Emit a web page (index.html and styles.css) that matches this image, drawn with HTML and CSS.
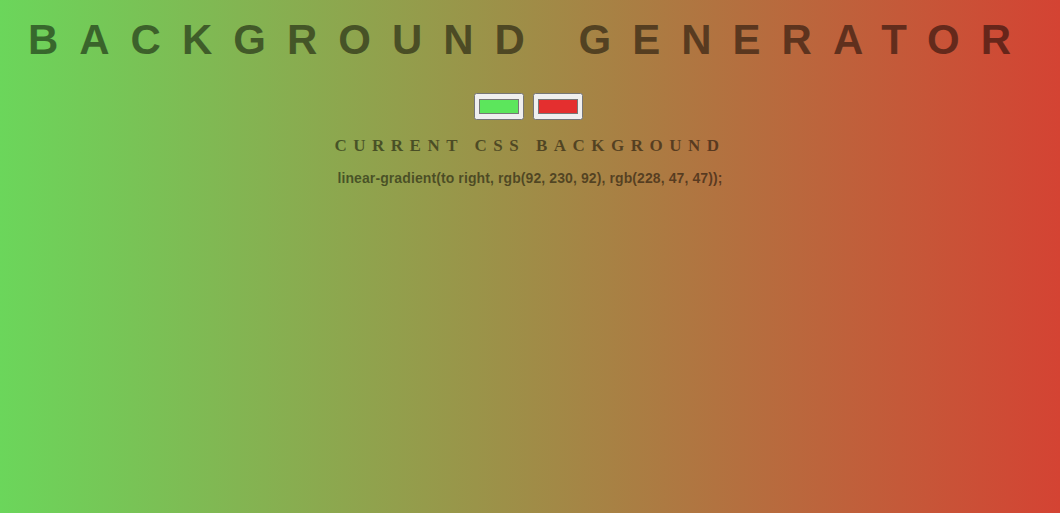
FILE: index.html
```html
<!DOCTYPE html>
<html lang="en">
<head>
<meta charset="utf-8">
<title>Background Generator</title>
<link rel="stylesheet" href="styles.css">
</head>
<body>
<main class="page">
  <h1 class="title">Background Generator</h1>
  <div class="pickers">
    <input class="color1" type="color" name="color1" value="#5ce65c">
    <input class="color2" type="color" name="color2" value="#e42f2f">
  </div>
  <h2 class="subtitle">Current CSS Background</h2>
  <h3 class="css-value">linear-gradient(to right, rgb(92, 230, 92), rgb(228, 47, 47));</h3>
</main>
</body>
</html>
```

FILE: styles.css
```css
html, body {
  margin: 0;
  padding: 0;
  height: 100%;
}

body {
  background: linear-gradient(to right, #6bd65b, #d44333);
  color: rgba(0, 0, 0, 0.5);
  text-align: center;
}

.page {
  padding-top: 16px;
  display: flex;
  flex-direction: column;
  align-items: center;
}

.title {
  margin: 0;
  font: 700 42px/48px "Liberation Sans", Arial, sans-serif;
  text-transform: uppercase;
  letter-spacing: 21px;
  color: rgba(0, 0, 0, 0.5);
}

.pickers {
  margin-top: 29px;
  padding-right: 3px;
  display: flex;
  gap: 9px;
  justify-content: center;
}

.pickers input {
  width: 50px;
  height: 27px;
  margin: 0;
}

.subtitle {
  margin: 16px 0 0;
  font: 700 17px/20px "Liberation Serif", "Times New Roman", serif;
  text-transform: uppercase;
  letter-spacing: 6.5px;
  color: rgba(0, 0, 0, 0.5);
}

.css-value {
  margin: 14px 0 0;
  font: 700 14px/16px "Liberation Sans", Arial, sans-serif;
  letter-spacing: 0.1px;
  color: rgba(0, 0, 0, 0.5);
}
```
